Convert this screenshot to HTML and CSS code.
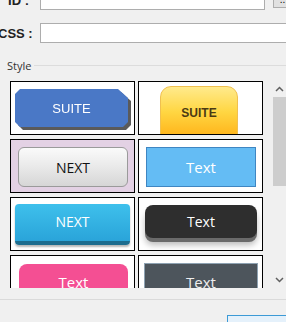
FILE: index.html
```html
<!DOCTYPE html>
<html lang="en">
<head>
  <meta charset="UTF-8" />
  <title>Style Picker</title>
  <link rel="stylesheet" href="styles.css">
</head>
<body>
  <div class="dialog">
    <div class="field field-id">
      <label>ID :</label>
      <input type="text" class="text-input short">
      <button class="browse">...</button>
    </div>
    <div class="field field-css">
      <label>CSS :</label>
      <input type="text" class="text-input">
    </div>
    <div class="group-title">
      <span>Style</span>
      <div class="group-line"></div>
    </div>
    <div class="style-list">
      <div class="style-grid">
        <div class="cell">
          <div class="chamfer-wrap"><div class="btn suite-blue">SUITE</div></div>
        </div>
        <div class="cell">
          <div class="btn suite-yellow">SUITE</div>
        </div>
        <div class="cell selected">
          <div class="btn next-gray">NEXT</div>
        </div>
        <div class="cell">
          <div class="btn text-sky">Text</div>
        </div>
        <div class="cell">
          <div class="btn next-blue">NEXT</div>
        </div>
        <div class="cell">
          <div class="btn text-dark">Text</div>
        </div>
        <div class="cell">
          <div class="btn text-pink">Text</div>
        </div>
        <div class="cell">
          <div class="btn text-slate">Text</div>
        </div>
      </div>
      <div class="scrollbar">
        <div class="arrow">
          <svg width="9" height="6" viewBox="0 0 9 6"><path d="M1 5 L4.5 1.5 L8 5" fill="none" stroke="#606060" stroke-width="1.5"/></svg>
        </div>
        <div class="track"><div class="thumb"></div></div>
        <div class="arrow">
          <svg width="9" height="6" viewBox="0 0 9 6"><path d="M1 1 L4.5 4.5 L8 1" fill="none" stroke="#606060" stroke-width="1.5"/></svg>
        </div>
      </div>
    </div>
    <div class="footer">
      <button class="ok-btn">OK</button>
    </div>
  </div>
</body>
</html>
```

FILE: styles.css
```css
body {
  margin: 0;
  background: #f0f0f0;
  font-family: "Liberation Sans", Arial, sans-serif;
  overflow: hidden;
}
.dialog {
  width: 286px;
  height: 322px;
  overflow: hidden;
}
.field {
  display: flex;
  align-items: center;
  height: 20px;
}
.field label {
  flex-shrink: 0;
  width: 31px;
  margin-left: -2px;
  margin-right: 11px;
  text-align: right;
  white-space: nowrap;
  font-size: 13px;
  font-weight: bold;
  color: #222;
}
.field-id {
  margin-top: -10px;
}
.field-css {
  margin-top: 13px;
}
.text-input {
  box-sizing: border-box;
  height: 20px;
  width: 260px;
  border: 1px solid #adadad;
  background: white;
  padding: 0;
  flex-shrink: 0;
}
.text-input.short {
  width: 225px;
}
.browse {
  box-sizing: border-box;
  margin-left: 8px;
  margin-top: -2px;
  width: 22px;
  height: 18px;
  border: 1px solid #adadad;
  background: #e1e1e1;
  font-size: 10px;
  padding: 0;
  flex-shrink: 0;
}
.group-title {
  display: flex;
  align-items: center;
  margin-top: 16px;
  height: 12px;
}
.group-title span {
  margin-left: 7px;
  font-family: "Open Sans", sans-serif;
  font-size: 11px;
  color: #333;
}
.group-line {
  flex: 1;
  height: 1px;
  margin-left: 3px;
  margin-top: 1px;
  background: #dcdcdc;
}
.style-list {
  display: flex;
  margin-top: 10px;
  margin-left: 10px;
  height: 207px;
}
.style-grid {
  display: grid;
  grid-template-columns: 125px 125px;
  grid-auto-rows: 54px;
  column-gap: 3px;
  row-gap: 4px;
  height: 207px;
  overflow: hidden;
  width: 253px;
  flex-shrink: 0;
}
.cell {
  box-sizing: border-box;
  border: 1px solid #000;
  background: white;
  display: flex;
  align-items: flex-start;
  overflow: hidden;
}
.cell.selected {
  background: #e3d1e4;
}
.btn {
  box-sizing: border-box;
  display: flex;
  align-items: center;
  justify-content: center;
  flex-shrink: 0;
  color: white;
  font-family: "Open Sans", sans-serif;
  font-size: 14px;
}
.chamfer-wrap {
  margin-top: 7px;
  margin-left: 4px;
  filter: drop-shadow(3px 3px 0 #5a5a5a);
}
.suite-blue {
  width: 113px;
  height: 38px;
  background: #4a78c6;
  font-family: "Liberation Sans", Arial, sans-serif;
  font-size: 13px;
  clip-path: polygon(5px 0, 103px 0, 113px 9px, 113px 33px, 108px 38px, 5px 38px, 0 33px, 0 5px);
}
.suite-yellow {
  width: 78px;
  height: 52px;
  margin-top: 4px;
  margin-left: 21px;
  border-radius: 11px 11px 0 0;
  border: 1px solid #f0c050;
  background: linear-gradient(#ffea8c, #ffd642 50%, #ffb319);
  color: #4b3a14;
  font-family: "Liberation Sans", Arial, sans-serif;
  font-weight: bold;
  font-size: 12px;
  padding-top: 2px;
}
.next-gray {
  width: 110px;
  height: 40px;
  margin-top: 7px;
  margin-left: 7px;
  border: 1px solid #9a9a9a;
  border-radius: 6px;
  background: linear-gradient(#fafafa, #e9e9e9 50%, #d6d6d6);
  color: #111;
}
.text-sky {
  width: 110px;
  height: 40px;
  margin-top: 7px;
  margin-left: 7px;
  border: 1px solid #3f86c2;
  background: #64bcf4;
  font-size: 15px;
}
.next-blue {
  width: 115px;
  height: 41px;
  margin-top: 6px;
  margin-left: 4px;
  border-radius: 4px;
  background: linear-gradient(#3ec0ec, #2aa4d9);
  border-bottom: 4px solid #1c6c8e;
  box-shadow: 0 2px 2px #b8b8b8;
  font-size: 14px;
  padding-bottom: 3px;
}
.text-dark {
  width: 112px;
  height: 33px;
  margin-top: 7px;
  margin-left: 6px;
  border-radius: 8px;
  background: #2e2e2e;
  box-shadow: 0 4px 0 #6a6a6a, 0 7px 6px #bbb;
  font-size: 14px;
}
.text-pink {
  width: 109px;
  height: 40px;
  margin-top: 8px;
  margin-left: 8px;
  border-radius: 8px;
  background: #f44f93;
  font-size: 15px;
  align-items: flex-start;
  padding-top: 8px;
}
.text-slate {
  width: 114px;
  height: 40px;
  margin-top: 7px;
  margin-left: 5px;
  border: 1px solid #8ea2b2;
  background: #4d555c;
  color: #eee;
  font-size: 15px;
  align-items: flex-start;
  padding-top: 8px;
}
.scrollbar {
  margin-left: 9px;
  width: 17px;
  flex-shrink: 0;
  display: flex;
  flex-direction: column;
  background: #f0f0f0;
}
.arrow {
  height: 16px;
  width: 14px;
  display: flex;
  align-items: center;
  justify-content: center;
}
.track {
  flex: 1;
}
.thumb {
  margin-left: 1px;
  width: 13px;
  height: 89px;
  background: #cdcdcd;
}
.footer {
  margin-top: 11px;
  border-top: 1px solid #dadada;
  height: 30px;
}
.ok-btn {
  margin-top: 15px;
  margin-left: 227px;
  width: 75px;
  height: 23px;
  border: 1px solid #3c9ad6;
  background: #e5f1fb;
  font-size: 12px;
  padding: 0;
}
```
